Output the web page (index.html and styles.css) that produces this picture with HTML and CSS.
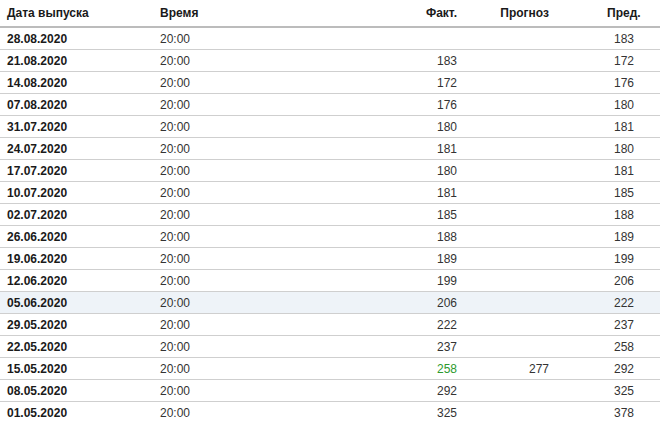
FILE: index.html
```html
<!DOCTYPE html>
<html lang="ru">
<head>
<meta charset="utf-8">
<link rel="stylesheet" href="styles.css">
</head>
<body>
<table class="hist">
  <colgroup>
    <col class="c-date"><col class="c-time"><col class="c-act"><col class="c-fc"><col class="c-prev">
  </colgroup>
  <thead>
    <tr><th class="left">Дата выпуска</th><th class="left">Время</th><th class="right">Факт.</th><th class="right fc">Прогноз</th><th class="right last">Пред.</th></tr>
  </thead>
  <tbody>
    <tr><td class="date">28.08.2020</td><td>20:00</td><td class="right"></td><td class="right fc"></td><td class="right last">183</td></tr>
    <tr><td class="date">21.08.2020</td><td>20:00</td><td class="right">183</td><td class="right fc"></td><td class="right last">172</td></tr>
    <tr><td class="date">14.08.2020</td><td>20:00</td><td class="right">172</td><td class="right fc"></td><td class="right last">176</td></tr>
    <tr><td class="date">07.08.2020</td><td>20:00</td><td class="right">176</td><td class="right fc"></td><td class="right last">180</td></tr>
    <tr><td class="date">31.07.2020</td><td>20:00</td><td class="right">180</td><td class="right fc"></td><td class="right last">181</td></tr>
    <tr><td class="date">24.07.2020</td><td>20:00</td><td class="right">181</td><td class="right fc"></td><td class="right last">180</td></tr>
    <tr><td class="date">17.07.2020</td><td>20:00</td><td class="right">180</td><td class="right fc"></td><td class="right last">181</td></tr>
    <tr><td class="date">10.07.2020</td><td>20:00</td><td class="right">181</td><td class="right fc"></td><td class="right last">185</td></tr>
    <tr><td class="date">02.07.2020</td><td>20:00</td><td class="right">185</td><td class="right fc"></td><td class="right last">188</td></tr>
    <tr><td class="date">26.06.2020</td><td>20:00</td><td class="right">188</td><td class="right fc"></td><td class="right last">189</td></tr>
    <tr><td class="date">19.06.2020</td><td>20:00</td><td class="right">189</td><td class="right fc"></td><td class="right last">199</td></tr>
    <tr><td class="date">12.06.2020</td><td>20:00</td><td class="right">199</td><td class="right fc"></td><td class="right last">206</td></tr>
    <tr class="hl"><td class="date">05.06.2020</td><td>20:00</td><td class="right">206</td><td class="right fc"></td><td class="right last">222</td></tr>
    <tr><td class="date">29.05.2020</td><td>20:00</td><td class="right">222</td><td class="right fc"></td><td class="right last">237</td></tr>
    <tr><td class="date">22.05.2020</td><td>20:00</td><td class="right">237</td><td class="right fc"></td><td class="right last">258</td></tr>
    <tr><td class="date">15.05.2020</td><td>20:00</td><td class="right pos">258</td><td class="right fc">277</td><td class="right last">292</td></tr>
    <tr><td class="date">08.05.2020</td><td>20:00</td><td class="right">292</td><td class="right fc"></td><td class="right last">325</td></tr>
    <tr><td class="date">01.05.2020</td><td>20:00</td><td class="right">325</td><td class="right fc"></td><td class="right last">378</td></tr>
  </tbody>
</table>
</body>
</html>
```
FILE: styles.css
```css
body {
  margin: 0;
  background: #fff;
  font-family: "Liberation Sans", Arial, sans-serif;
  color: #333;
}
.hist {
  width: 660px;
  border-collapse: collapse;
  table-layout: fixed;
  font-size: 12px;
}
.c-date { width: 153px; }
.c-time { width: 200px; }
.c-act { width: 114px; }
.c-fc { width: 133px; }
.c-prev { width: 60px; }
.hist th {
  height: 26px;
  padding: 0 7px;
  font-weight: bold;
  color: #1a1a1a;
  border-bottom: 2px solid #bcbcbc;
  vertical-align: middle;
  white-space: nowrap;
}
.hist td {
  height: 21px;
  padding: 0 7px;
  border-bottom: 1px solid #cfcfcf;
  vertical-align: middle;
  white-space: nowrap;
}
.hist tbody tr:last-child td { border-bottom: none; }
.left { text-align: left; }
.right { text-align: right; }
.hist th.right, .hist td.right { padding-right: 10px; }
.hist th.fc, .hist td.fc { padding-right: 51px; }
.hist th.last, .hist td.last { padding-right: 26px; }
.date { font-weight: bold; color: #1a1a1a; }
.hl td { background: #eef3f8; }
.pos { color: #2d9a2d; }
```
